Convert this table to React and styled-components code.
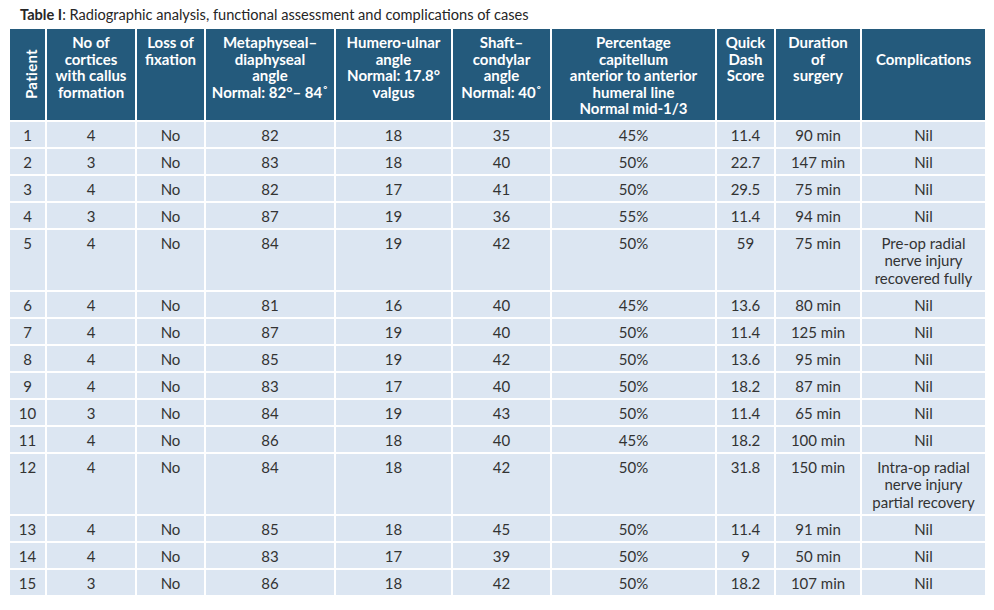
import React from 'react';
import styled, { createGlobalStyle } from 'styled-components';

const GlobalStyle = createGlobalStyle`
	body {
		margin: 0;
		background: #FFFFFF;
		font-family: Lato, "Open Sans", sans-serif;
	}
`;

const columns = [37, 90, 69, 130, 117, 99, 165, 59, 86, 123];

const rows = [
	['1', '4', 'No', '82', '18', '35', '45%', '11.4', '90 min', 'Nil'],
	['2', '3', 'No', '83', '18', '40', '50%', '22.7', '147 min', 'Nil'],
	['3', '4', 'No', '82', '17', '41', '50%', '29.5', '75 min', 'Nil'],
	['4', '3', 'No', '87', '19', '36', '55%', '11.4', '94 min', 'Nil'],
	['5', '4', 'No', '84', '19', '42', '50%', '59', '75 min', ['Pre-op radial', 'nerve injury', 'recovered fully']],
	['6', '4', 'No', '81', '16', '40', '45%', '13.6', '80 min', 'Nil'],
	['7', '4', 'No', '87', '19', '40', '50%', '11.4', '125 min', 'Nil'],
	['8', '4', 'No', '85', '19', '42', '50%', '13.6', '95 min', 'Nil'],
	['9', '4', 'No', '83', '17', '40', '50%', '18.2', '87 min', 'Nil'],
	['10', '3', 'No', '84', '19', '43', '50%', '11.4', '65 min', 'Nil'],
	['11', '4', 'No', '86', '18', '40', '45%', '18.2', '100 min', 'Nil'],
	['12', '4', 'No', '84', '18', '42', '50%', '31.8', '150 min', ['Intra-op radial', 'nerve injury', 'partial recovery']],
	['13', '4', 'No', '85', '18', '45', '50%', '11.4', '91 min', 'Nil'],
	['14', '4', 'No', '83', '17', '39', '50%', '9', '50 min', 'Nil'],
	['15', '3', 'No', '86', '18', '42', '50%', '18.2', '107 min', 'Nil'],
];

const headers = [
	['No of', 'cortices', 'with callus', 'formation'],
	['Loss of', 'fixation'],
	['Metaphyseal–', 'diaphyseal', 'angle', 'Normal: 82°– 84˚'],
	['Humero-ulnar', 'angle', 'Normal: 17.8°', 'valgus'],
	['Shaft–', 'condylar', 'angle', 'Normal: 40˚'],
	['Percentage', 'capitellum', 'anterior to anterior', 'humeral line', 'Normal mid-1/3'],
	['Quick', 'Dash', 'Score'],
	['Duration', 'of', 'surgery'],
];

const Lines = ({ lines }) => (
	Array.isArray(lines)
		? lines.map((line, i) => <React.Fragment key={i}>{i > 0 && <br />}{line}</React.Fragment>)
		: lines
);

const App = () => {
	return (
		<Page>
			<GlobalStyle />
			<Caption>
				<b>Table I</b>: Radiographic analysis, functional assessment and complications of cases
			</Caption>
			<Table>
				<colgroup>
					{columns.map((w, i) => <col key={i} style={{ width: w }} />)}
				</colgroup>
				<thead>
					<HeadRow>
						<HeadCell $vertical>
							<Rotated>Patient</Rotated>
						</HeadCell>
						{headers.map((h, i) => (
							<HeadCell key={i}>
								<Lines lines={h} />
							</HeadCell>
						))}
						<HeadCell $offset>Complications</HeadCell>
					</HeadRow>
				</thead>
				<tbody>
					{rows.map((r, i) => (
						<tr key={i}>
							{r.map((c, j) => (
								<Cell key={j}>
									<Lines lines={c} />
								</Cell>
							))}
						</tr>
					))}
				</tbody>
			</Table>
		</Page>
	);
};

const Page = styled.div`
	width: 994px;
	height: 610px;
	padding: 6px 0 0 10px;
	box-sizing: border-box;
	overflow: hidden;
`;

const Caption = styled.div`
	font-size: 14.6px;
	line-height: 18px;
	color: #262626;
	padding-left: 10px;
	margin-bottom: 5px;

	b {
		font-weight: 700;
	}
`;

const Table = styled.table`
	width: 975px;
	table-layout: fixed;
	border-collapse: separate;
	border-spacing: 0;

	tr > *:last-child {
		border-right: none;
	}
	tbody tr:last-child > * {
		border-bottom: none;
	}
`;

const HeadRow = styled.tr`
	height: 92px;
`;

const HeadCell = styled.th`
	background: #245A7C;
	color: #FFFFFF;
	font-size: 15px;
	font-weight: 700;
	line-height: 16.5px;
	text-align: center;
	vertical-align: ${p => (p.$vertical ? 'middle' : 'top')};
	padding: ${p => (p.$offset ? '22px' : '5px')} 1px 3px;
	border-right: 2px solid #FFFFFF;
	border-bottom: 2px solid #FFFFFF;
`;

const Rotated = styled.span`
	display: inline-block;
	writing-mode: vertical-rl;
	transform: rotate(180deg);
	font-size: 15px;
	margin-left: 8px;
	letter-spacing: 0.3px;
`;

const Cell = styled.td`
	background: #DCE6F2;
	color: #333333;
	font-size: 15px;
	line-height: 17.5px;
	text-align: center;
	vertical-align: top;
	padding: 5px 1px 2.5px;
	border-right: 2px solid #FFFFFF;
	border-bottom: 2px solid #FFFFFF;
`;

export default App;
